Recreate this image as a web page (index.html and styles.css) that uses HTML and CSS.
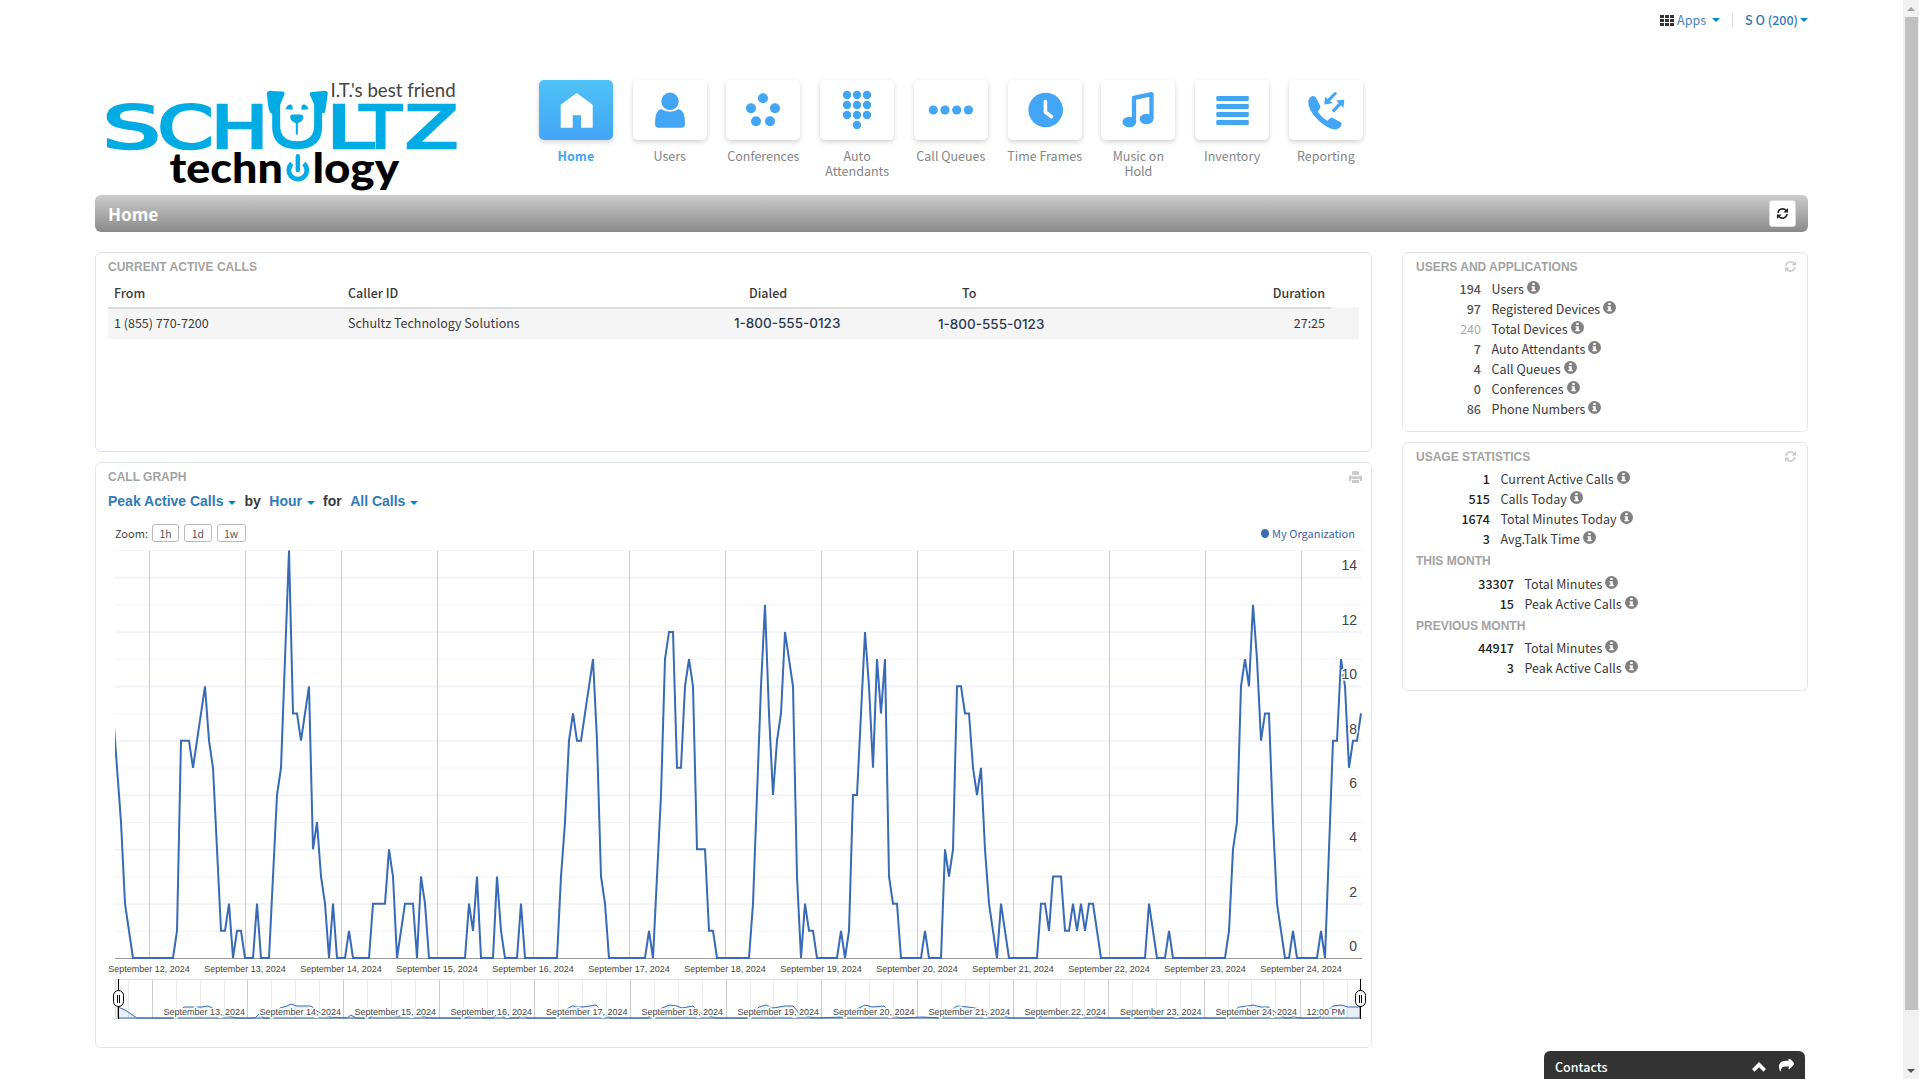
FILE: index.html
```html
<!DOCTYPE html>
<html lang="en">
<head>
<meta charset="utf-8">
<title>Home</title>
<link rel="stylesheet" href="styles.css">
</head>
<body>
<svg class="defs" width="0" height="0">
  <symbol id="refresh" viewBox="0 0 14 14">
    <path d="M2.1 6.2A5 5 0 0 1 10.9 3.8M11.9 7.8A5 5 0 0 1 3.1 10.2" fill="none" stroke="currentColor" stroke-width="1.8"/>
    <path d="M13 1v5H8zM1 13V8h5z" fill="currentColor"/>
  </symbol>
  <symbol id="info" viewBox="0 0 13 13">
    <circle cx="6.5" cy="6.5" r="6.5" fill="#808080"/>
    <path d="M5.3 2h2.4v2H5.3zM4.5 5.2h3.3v3.6h1v1.4H4.3V8.800h1V6.600h-.8z" fill="#fff"/>
  </symbol>
</svg>

<div class="page">
  <div class="topbar">
    <svg class="grid-icon" width="14" height="11" viewBox="0 0 14 11"><path d="M0 0h4v3H0zM5 0h4v3H5zM10 0h4v3h-4zM0 4h4v3H0zM5 4h4v3H5zM10 4h4v3h-4zM0 8h4v3H0zM5 8h4v3H5zM10 8h4v3h-4z" fill="#333"/></svg>
    <a class="apps">Apps</a><i class="caret"></i>
    <span class="divider"></span>
    <a class="account">S O (200)</a><i class="caret"></i>
  </div>

  <div class="header">
    <svg class="logo" viewBox="48 66 1054 332" width="351" height="111">
      <g class="logo-main">
        <text x="38" y="264" textLength="174" lengthAdjust="spacingAndGlyphs">S</text>
        <text x="203" y="264" textLength="168" lengthAdjust="spacingAndGlyphs">C</text>
        <text x="363" y="264" textLength="172" lengthAdjust="spacingAndGlyphs">H</text>
        <text x="710" y="264" textLength="142" lengthAdjust="spacingAndGlyphs">L</text>
        <text x="811" y="264" textLength="124" lengthAdjust="spacingAndGlyphs">T</text>
        <text x="946" y="264" textLength="160" lengthAdjust="spacingAndGlyphs">Z</text>
      </g>
      <g fill="#00ace3">
        <path d="M531 97Q534 91 545 92L578 94Q586 95 584 103L571 133V196Q571 243 622 243Q673 243 673 196V133L660 103Q658 96 667 95L700 92Q713 91 714 98L710 130Q708 148 704 160L697 158V200Q697 267 622 267Q547 267 547 200V160L541 158Q536 148 534 130Z"/>
        <path d="M587 147Q592 132 603 133Q610 137 608 149ZM656 147Q651 132 640 133Q633 137 635 149Z"/>
        <path d="M601 170Q601 162 612 163H630Q641 162 641 171Q640 183 624 189V222Q621 226 618 222V189Q602 184 601 170Z"/>
      </g>
      <text class="logo-sub" x="239" y="368" textLength="340" lengthAdjust="spacingAndGlyphs">techn</text>
      <path d="M606 310A27 27 0 1 0 642 310" fill="none" stroke="#00ace3" stroke-width="14"/>
      <path d="M624 288V330" stroke="#00ace3" stroke-width="13" stroke-linecap="round"/>
      <text class="logo-sub" x="668" y="368" textLength="260" lengthAdjust="spacingAndGlyphs">logy</text>
      <text class="logo-tag" x="722" y="110" textLength="376" lengthAdjust="spacingAndGlyphs">I.T.'s best friend</text>
    </svg>

    <div class="nav">
      <a class="item active"><span class="tile"><svg viewBox="0 0 74 60"><path d="M37.700 13L53.700 24.700V47.700H42V35.300H33.700V47.700H21.700V24.700Z"/></svg></span>Home</a>
      <a class="item"><span class="tile"><svg viewBox="0 0 74 60"><circle cx="37" cy="21.300" r="8.700"/><path d="M28 29Q37 34.500 46 29Q52 30.500 52 44Q52 47.700 48.500 47.700H25.500Q22 47.700 22 44Q22 30.500 28 29Z"/></svg></span>Users</a>
      <a class="item"><span class="tile"><svg viewBox="0 0 74 60"><circle cx="37" cy="18.300" r="5"/><circle cx="25" cy="28.300" r="5"/><circle cx="49" cy="28.300" r="5"/><circle cx="30" cy="41.300" r="5"/><circle cx="44" cy="41.300" r="5"/></svg></span>Conferences</a>
      <a class="item"><span class="tile"><svg viewBox="0 0 74 60"><circle cx="27" cy="15" r="4.200"/><circle cx="37" cy="15" r="4.200"/><circle cx="47" cy="15" r="4.200"/><circle cx="27" cy="25" r="4.200"/><circle cx="37" cy="25" r="4.200"/><circle cx="47" cy="25" r="4.200"/><circle cx="27" cy="35" r="4.200"/><circle cx="37" cy="35" r="4.200"/><circle cx="47" cy="35" r="4.200"/><circle cx="37" cy="45" r="4.200"/></svg></span>Auto<br>Attendants</a>
      <a class="item"><span class="tile"><svg viewBox="0 0 74 60"><circle cx="19.300" cy="30" r="4.600"/><circle cx="31" cy="30" r="4.600"/><circle cx="42.700" cy="30" r="4.600"/><circle cx="54.400" cy="30" r="4.600"/></svg></span>Call Queues</a>
      <a class="item"><span class="tile"><svg viewBox="0 0 74 60"><circle cx="37.700" cy="30" r="17.300"/><path d="M37.400 21.500V32L43.500 36.700" fill="none" stroke="#fff" stroke-width="3.600" stroke-linecap="round" stroke-linejoin="round"/></svg></span>Time Frames</a>
      <a class="item"><span class="tile"><svg viewBox="0 0 74 60"><ellipse cx="28.300" cy="42" rx="6.900" ry="5.200"/><ellipse cx="45.500" cy="39" rx="6.900" ry="5.200"/><path d="M33 42V17.800L50.500 14.200V39" fill="none" stroke="#42a5f5" stroke-width="4.300" stroke-linejoin="round"/></svg></span>Music on<br>Hold</a>
      <a class="item"><span class="tile"><svg viewBox="0 0 74 60"><g><rect x="21.300" y="16" width="32.500" height="5" rx="1"/><rect x="21.300" y="24" width="32.500" height="5" rx="1"/><rect x="21.300" y="32" width="32.500" height="5" rx="1"/><rect x="21.300" y="40" width="32.500" height="5" rx="1"/></g></svg></span>Inventory</a>
      <a class="item"><span class="tile"><svg viewBox="0 0 74 60"><path d="M19.300 22Q19.500 17.500 23.500 16Q26 15.500 27.500 18.500L31.300 26Q31.700 28 28.700 31.500Q32.500 37.500 38.700 40.800Q40.500 37.200 43 37.700L51.500 42Q53.500 43.500 52.300 45.500Q50 49.500 46 49.500Q39 49 29.500 40.500Q19 30 19.300 22Z"/><path d="M35.200 24.500L36.200 16.800L38.600 19L45.200 12.400Q47 11.400 48 13.500L41.200 21L43.600 23.300ZM55.300 19.800L54.400 27.700L52 25.300L45.200 32.400Q43.300 32.200 42.900 30.300L49.600 23L47.200 20.600Z"/></svg></span>Reporting</a>
    </div>
  </div>

  <div class="titlebar">
    <h1>Home</h1>
    <button class="refresh-btn"><svg width="13" height="13"><use href="#refresh"/></svg></button>
  </div>

  <div class="columns">
    <div class="main">
      <div class="panel calls">
        <h2>CURRENT ACTIVE CALLS</h2>
        <div class="thead"><span>From</span><span>Caller ID</span><span>Dialed</span><span>To</span><span class="dur">Duration</span></div>
        <div class="trow"><span>1 (855) 770-7200</span><span>Schultz Technology Solutions</span><span class="phone">1-800-555-0123</span><span class="phone second">1-800-555-0123</span><span class="dur">27:25</span></div>
      </div>

      <div class="panel graph">
        <div class="panel-head"><h2>CALL GRAPH</h2>
          <svg width="13" height="12" viewBox="0 0 13 12"><path d="M4 0h5l1 1v3H3V1zM0 4.500h2.300v.7h8.400v-.7H13V10h-2V8H2v2H0zM3 9h7v3H3z" fill="#ccc"/></svg></div>
        <div class="filters">
          <a>Peak Active Calls</a><i class="caret"></i><span>by</span><a>Hour</a><i class="caret"></i><span>for</span><a>All Calls</a><i class="caret"></i>
        </div>
        <div class="chart-tools">
          <span>Zoom:</span><button>1h</button><button>1d</button><button>1w</button>
          <span class="legend"><i></i>My Organization</span>
        </div>
        <svg class="chart" viewBox="100 546 1270 484" width="1270" height="484">
          <defs>
            <pattern id="hgrid" x="115" y="550" width="10" height="54.400" patternUnits="userSpaceOnUse">
              <rect width="10" height="1" fill="#f4f4f9"/><rect y="27.200" width="10" height="1" fill="#e8e8f4"/>
            </pattern>
            <clipPath id="plot"><rect x="115" y="549" width="1247" height="411"/></clipPath>
          </defs>
          <rect x="115" y="550" width="1247" height="405" fill="url(#hgrid)"/>
          <path d="M149.500 551V958M245.500 551V958M341.500 551V958M437.500 551V958M533.500 551V958M629.500 551V958M725.500 551V958M821.500 551V958M917.500 551V958M1013.500 551V958M1109.500 551V958M1205.500 551V958M1301.500 551V958" stroke="#ccc"/>
          <path d="M115 958.500H1362" stroke="#999"/>
          <g clip-path="url(#plot)">
            <polyline class="series" transform="translate(0 958) scale(1 -27.170)" points="113,9 117,7 121,5 125,2 129,1 133,0 173,0 177,1 181,8 189,8 193,7 197,8 201,9 205,10 209,8 213,7 217,4 221,1 225,1 229,2 233,0 237,1 241,1 245,0 253,0 257,2 261,0 269,0 273,3 277,6 281,7 285,11 289,15 293,9 297,9 301,8 305,9 309,10 313,4 317,5 321,3 325,2 329,0 333,2 337,0 345,0 349,1 353,0 369,0 373,2 385,2 389,4 393,3 397,0 401,1 405,2 413,2 417,0 421,3 425,2 429,0 465,0 469,2 473,1 477,3 481,0 493,0 497,3 501,1 505,0 517,0 521,2 525,0 557,0 561,3 565,5 569,8 573,9 577,8 581,8 585,9 589,10 593,11 597,8 601,3 605,2 609,0 645,0 649,1 653,0 657,3 661,6 665,11 669,12 673,12 677,7 681,7 685,10 689,11 693,10 697,4 705,4 709,1 713,1 717,0 749,0 753,2 757,6 761,10 765,13 769,9 773,6 777,8 781,9 785,12 789,11 793,10 797,3 801,0 805,2 809,1 813,1 817,0 837,0 841,1 845,0 849,1 853,6 857,6 861,9 865,12 869,10 873,7 877,11 881,9 885,11 889,3 893,2 897,2 901,0 921,0 925,1 929,0 941,0 945,4 949,3 953,4 957,10 961,10 965,9 969,9 973,7 977,6 981,7 985,4 989,2 993,1 997,0 1001,2 1005,1 1009,0 1037,0 1041,2 1045,2 1049,1 1053,3 1061,3 1065,1 1069,1 1073,2 1077,1 1081,2 1085,1 1089,2 1093,2 1097,1 1101,0 1145,0 1149,2 1153,1 1157,0 1165,0 1169,1 1173,0 1225,0 1229,1 1233,4 1237,5 1241,10 1245,11 1249,10 1253,13 1257,11 1261,8 1265,9 1269,9 1273,5 1277,2 1281,1 1285,0 1289,0 1293,1 1297,0 1317,0 1321,1 1325,0 1329,4 1333,8 1337,8 1341,11 1345,10 1349,7 1353,8 1357,8 1361,9"/>
          </g>
          <g class="ylabels">
            <text x="1357" y="570">14</text><text x="1357" y="625">12</text><text x="1357" y="679">10</text><text x="1357" y="734">8</text><text x="1357" y="788">6</text><text x="1357" y="842">4</text><text x="1357" y="897">2</text><text x="1357" y="951">0</text>
          </g>
          <g class="xlabels">
            <text x="149" y="972">September 12, 2024</text><text x="245" y="972">September 13, 2024</text><text x="341" y="972">September 14, 2024</text><text x="437" y="972">September 15, 2024</text><text x="533" y="972">September 16, 2024</text><text x="629" y="972">September 17, 2024</text><text x="725" y="972">September 18, 2024</text><text x="821" y="972">September 19, 2024</text><text x="917" y="972">September 20, 2024</text><text x="1013" y="972">September 21, 2024</text><text x="1109" y="972">September 22, 2024</text><text x="1205" y="972">September 23, 2024</text><text x="1301" y="972">September 24, 2024</text>
          </g>

          <path d="M128.500 979V1018M176.500 979V1018M200.500 979V1018M224.500 979V1018M271.500 979V1018M295.500 979V1018M319.500 979V1018M367.500 979V1018M391.500 979V1018M415.500 979V1018M463.500 979V1018M487.500 979V1018M510.500 979V1018M558.500 979V1018M582.500 979V1018M606.500 979V1018M654.500 979V1018M678.500 979V1018M702.500 979V1018M750.500 979V1018M773.500 979V1018M797.500 979V1018M845.500 979V1018M869.500 979V1018M893.500 979V1018M941.500 979V1018M965.500 979V1018M989.500 979V1018M1036.500 979V1018M1060.500 979V1018M1084.500 979V1018M1132.500 979V1018M1156.500 979V1018M1180.500 979V1018M1228.500 979V1018M1251.500 979V1018M1275.500 979V1018M1323.500 979V1018M1347.500 979V1018" stroke="#ebebeb"/>
          <path d="M152.500 979V1018M247.500 979V1018M343.500 979V1018M439.500 979V1018M534.500 979V1018M630.500 979V1018M726.500 979V1018M821.500 979V1018M917.500 979V1018M1013.500 979V1018M1108.500 979V1018M1204.500 979V1018M1300.500 979V1018" stroke="#ccc"/>
          <path d="M115.500 1018.500V979.500H1361.500M115 1018.500H1361" stroke="#ddd" fill="none"/>
          <polygon class="mini-fill" points="118,1018 118,1007 125,1010 137,1018 173,1018 184,1007 194,1007 202,1007 208,1006 215,1009 222,1015 228,1016 237,1018 255,1018 259,1014 264,1018 272,1018 280,1008 287,1006 291,1004 297,1006 311,1006 318,1012 331,1017 347,1018 351,1015 356,1018 369,1018 376,1014 390,1014 397,1017 405,1014 415,1014 429,1018 465,1018 477,1013 484,1018 493,1018 498,1013 505,1018 518,1018 522,1014 527,1018 557,1018 567,1009 572,1006 583,1007 596,1005 604,1014 611,1018 647,1018 662,1008 670,1005 677,1006 682,1008 693,1006 700,1013 716,1018 748,1018 759,1007 766,1005 773,1008 785,1006 793,1006 800,1014 815,1018 842,1017 855,1010 865,1005 872,1007 884,1006 891,1014 900,1018 922,1017 942,1018 947,1013 957,1006 968,1007 981,1009 989,1014 1002,1015 1010,1018 1037,1018 1045,1015 1060,1014 1076,1015 1092,1015 1102,1018 1146,1018 1150,1015 1156,1018 1225,1018 1239,1007 1247,1006 1253,1005 1261,1007 1269,1007 1276,1013 1285,1018 1290,1018 1294,1016 1298,1018 1317,1018 1321,1016 1333,1006 1341,1005 1348,1007 1360,1007 1360,1018"/>
          <g class="mini-labels">
            <text x="245" y="1015">September 13, 2024</text><text x="341" y="1015">September 14, 2024</text><text x="436" y="1015">September 15, 2024</text><text x="532" y="1015">September 16, 2024</text><text x="627.500" y="1015">September 17, 2024</text><text x="723" y="1015">September 18, 2024</text><text x="819" y="1015">September 19, 2024</text><text x="914.500" y="1015">September 20, 2024</text><text x="1010" y="1015">September 21, 2024</text><text x="1106" y="1015">September 22, 2024</text><text x="1201.500" y="1015">September 23, 2024</text><text x="1297" y="1015">September 24, 2024</text><text x="1345" y="1015">12:00 PM</text>
          </g>
          <g stroke="#000" fill="#fff">
            <path d="M118.500 979V1019M1360.500 979V1019"/>
            <rect x="113.500" y="990.500" width="10" height="16" rx="5"/><rect x="1355.500" y="990.500" width="10" height="16" rx="5"/>
            <path d="M117.500 995V1003M119.500 995V1003M1359.500 995V1003M1361.500 995V1003"/>
          </g>
        </svg>
      </div>
    </div>

    <div class="side">
      <div class="panel users">
        <div class="panel-head"><h2>USERS AND APPLICATIONS</h2><svg width="13" height="13"><use href="#refresh"/></svg></div>
        <dl>
          <dt>194</dt><dd>Users<svg><use href="#info"/></svg></dd>
          <dt>97</dt><dd>Registered Devices<svg><use href="#info"/></svg></dd>
          <dt class="muted">240</dt><dd>Total Devices<svg><use href="#info"/></svg></dd>
          <dt>7</dt><dd>Auto Attendants<svg><use href="#info"/></svg></dd>
          <dt>4</dt><dd>Call Queues<svg><use href="#info"/></svg></dd>
          <dt>0</dt><dd>Conferences<svg><use href="#info"/></svg></dd>
          <dt>86</dt><dd>Phone Numbers<svg><use href="#info"/></svg></dd>
        </dl>
      </div>
      <div class="panel usage">
        <div class="panel-head"><h2>USAGE STATISTICS</h2><svg width="13" height="13"><use href="#refresh"/></svg></div>
        <dl class="strong">
          <dt>1</dt><dd>Current Active Calls<svg><use href="#info"/></svg></dd>
          <dt>515</dt><dd>Calls Today<svg><use href="#info"/></svg></dd>
          <dt>1674</dt><dd>Total Minutes Today<svg><use href="#info"/></svg></dd>
          <dt>3</dt><dd>Avg.Talk Time<svg><use href="#info"/></svg></dd>
        </dl>
        <h2 class="this-month">THIS MONTH</h2>
        <dl class="strong month">
          <dt>33307</dt><dd>Total Minutes<svg><use href="#info"/></svg></dd>
          <dt>15</dt><dd>Peak Active Calls<svg><use href="#info"/></svg></dd>
        </dl>
        <h2 class="prev-month">PREVIOUS MONTH</h2>
        <dl class="strong month prev">
          <dt>44917</dt><dd>Total Minutes<svg><use href="#info"/></svg></dd>
          <dt>3</dt><dd>Peak Active Calls<svg><use href="#info"/></svg></dd>
        </dl>
      </div>
    </div>
  </div>
</div>

<div class="contacts">
  <span>Contacts</span>
  <svg width="14" height="10" viewBox="0 0 14 10"><path d="M7 0L14 7L11.500 9.700L7 5.300L2.500 9.700L0 7Z" fill="#fff"/></svg>
  <svg width="15" height="15" viewBox="0 0 1792 1792"><path d="M1792 640q0 26-19 45l-512 512q-19 19-45 19t-45-19-19-45v-256h-224q-98 0-175.500 6t-154 21.500-133 42.500-105.500 69.500-80 101-48.500 138.500-17.500 181q0 15-8.500 25t-23.500 10q-16 0-28-17-7-9-13-22t-13.500-30-10.500-24q-127-285-127-451 0-199 53-333 162-403 875-403h224v-256q0-26 19-45t45-19 45 19l512 512q19 19 19 45z" fill="#fff"/></svg>
</div>

<div class="scrollbar"><i class="up"></i><i class="thumb"></i><i class="down"></i></div>
</body>
</html>
```
FILE: styles.css
```css
* { box-sizing: border-box; }
body {
  margin: 0;
  width: 1919px;
  height: 1079px;
  overflow: hidden;
  background: #fff;
  color: #3a3a3a;
  font: 12.500px/20px "Noto Sans CJK SC", "Noto Sans", sans-serif;
}
h1, h2, dl, dd { margin: 0; }
.defs { position: absolute; }
.page { width: 1713px; margin-left: 95px; }

.caret {
  display: inline-block;
  border: 4px solid transparent;
  border-top-color: #08c;
  border-bottom: 0;
}
.topbar {
  display: flex;
  align-items: center;
  justify-content: flex-end;
  height: 80px;
  padding-bottom: 40px;
  color: #337ab7;
}
.apps { margin: 0 6px 0 3px; color: #4a86bf; }
.divider { width: 1px; height: 14px; margin: 0 12px; background: #ddd; }
.account { font-weight: 500; margin-right: 2px; }

.header { display: flex; height: 115px; }
.logo { margin: 2px 0 0 11px; flex: none; overflow: visible; }
.logo-main { font: 176px "DejaVu Sans", sans-serif; fill: #00ace3; stroke: #00ace3; stroke-width: 8px; }
.logo-sub { font: 900 128px Lato, sans-serif; fill: #000; }
.logo-tag { font: 56px Lato, sans-serif; fill: #444; }
.nav { display: flex; margin-left: 72px; }
.item {
  width: 93.750px;
  display: block;
  text-align: center;
  line-height: 15px;
  color: #858585;
}
.item.active { color: #42a5f5; font-weight: 700; }
.tile {
  display: block;
  width: 74px;
  height: 60px;
  margin: 0 auto 8px;
  border-radius: 5px;
  background: #fff;
  box-shadow: 0 2px 5px rgba(0,0,0,.18);
}
.tile svg { display: block; width: 74px; height: 60px; fill: #42a5f5; }
.active .tile { background: linear-gradient(#4fc3f7, #42a5f5); }
.active .tile svg { fill: #fff; }

.titlebar {
  display: flex;
  align-items: center;
  justify-content: space-between;
  height: 37px;
  padding: 0 12px 0 13px;
  border-radius: 6px;
  background: linear-gradient(#ccc, #8a8a8a);
}
.titlebar h1 { font-size: 17.200px; font-weight: 700; color: #fff; }
.refresh-btn {
  display: flex;
  align-items: center;
  justify-content: center;
  width: 27px;
  height: 27px;
  padding: 0;
  border: 1px solid #ddd;
  border-radius: 3px;
  background: #fff;
  color: #222;
}

.columns { display: flex; justify-content: space-between; margin-top: 20px; }
.main { width: 1277px; }
.side { width: 406px; }
.panel { border: 1px solid #e1e5ee; border-radius: 6px; margin-bottom: 10px; padding: 7px 12px 0; }
h2 { font: bold 12px/14px "Liberation Sans", Arial, sans-serif; color: #a3a3a3; }
.panel-head { display: flex; justify-content: space-between; color: #ccc; }
.side .panel { padding-left: 13px; }
.side .panel-head svg { margin-right: -2px; }

.calls { height: 200px; }
.thead, .trow { display: grid; grid-template-columns: 234px 401px 213px 210px 153px; justify-content: start; }
.thead { width: 1223px; height: 33px; padding: 9px 6px 0; font-weight: 500; }
.trow { height: 32px; width: 1251px; padding: 6px 6px 0; background: linear-gradient(#dcdcdc, #dcdcdc) 0 0 / 1223px 2px no-repeat #f5f5f5; }
.dur { text-align: right; }
.phone { font: 500 13.500px/20px Inter, sans-serif; color: #2b3950; margin-left: -15px; }
.second { margin-left: -24px; padding-top: 1px; }

.graph { height: 586px; padding-top: 7px; }
.graph .panel-head svg { margin: 1px -3px 0 0; }
.filters { display: flex; align-items: center; height: 18px; margin-top: 8px; font: bold 14px/18px "Liberation Sans", Arial, sans-serif; }
.filters a { color: #337ab7; }
.filters .caret { margin: 3px 8px 0 5px; }
.filters span { margin-right: 8.500px; }
.chart-tools { display: flex; align-items: center; margin-top: 14px; padding-left: 7px; font-size: 11px; height: 18px; color: #444; }
.chart-tools button {
  height: 18px;
  margin: 0 0 0 5px;
  padding: 0 7px;
  border: 1px solid #bbb;
  border-radius: 3px;
  background: #fff;
  color: #555;
  font: inherit;
  font-size: 10.500px;
  line-height: 15px;
}
.chart-tools span + button { margin-left: 4px; }
.chart-tools button:nth-of-type(n) { padding: 0 6.500px; }
.legend { display: flex; align-items: center; margin-left: auto; margin-right: 4px; color: #3a66ad; }
.legend i { width: 8px; height: 9px; margin-right: 3px; border-radius: 50%; background: #386ab5; }

.chart { display: block; margin: 4px 0 0 -8px; }
.series { fill: none; stroke: #386ab5; stroke-width: 2px; vector-effect: non-scaling-stroke; }
.ylabels { font: 14px "Liberation Sans", Arial, sans-serif; fill: #444; text-anchor: end; stroke: #fff; stroke-width: 3px; paint-order: stroke; }
.xlabels { font: 9px "Liberation Sans", Arial, sans-serif; fill: #444; text-anchor: middle; }
.mini-fill { fill: #386ab51c; stroke: #386ab5; }
.mini-labels { font: 9px "Liberation Sans", Arial, sans-serif; fill: #444; text-anchor: end; stroke: #fff; stroke-width: 3px; paint-order: stroke; }

.users { height: 180px; }
.usage { height: 249px; }
dl { display: grid; grid-template-columns: 65px 1fr; column-gap: 10.500px; margin-top: 5px; }
dt { text-align: right; color: #555; font-weight: 500; }
dt.muted { color: #aaa; font-weight: 400; }
dd svg { width: 13px; height: 13px; margin-left: 3px; vertical-align: 0; }
.side .strong { grid-template-columns: 74px 1fr; }
.side .month { grid-template-columns: 98px 1fr; margin-top: 6px; }
.side .prev { margin-top: 5px; }
.strong dt { color: #222; }
.this-month { margin-top: 5px; }
.prev-month { margin-top: 5px; }

.contacts {
  position: fixed;
  left: 1544px;
  bottom: 0;
  width: 261px;
  height: 28px;
  display: flex;
  align-items: center;
  gap: 13px;
  padding: 3px 11px 0;
  border-radius: 6px 6px 0 0;
  background: #333;
  color: #fff;
  font-weight: 500;
}
.contacts span { flex: 1; }

.scrollbar { position: fixed; right: 0; top: 0; width: 16px; height: 1079px; background: #f1f1f1; display: flex; flex-direction: column; align-items: center; }
.scrollbar i { display: block; }
.up { border: 4px solid transparent; border-bottom-color: #a3a3a3; border-top: 0; margin: 7px 0 6px; }
.thumb { width: 13px; height: 993px; background: #c1c1c1; }
.down { border: 4px solid transparent; border-top-color: #505050; border-bottom: 0; margin-top: 59px; }
```
